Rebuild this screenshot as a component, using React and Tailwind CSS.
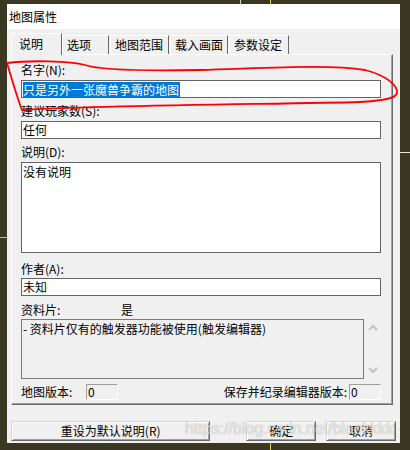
export default function App() {
  const tabs = [
    { name: "选项", w: "w-[47px]" },
    { name: "地图范围", w: "w-[59px]" },
    { name: "载入画面", w: "w-[58px]" },
    { name: "参数设定", w: "w-[60px]" },
  ];

  return (
    <div className="relative w-[410px] h-[450px] overflow-hidden bg-[#3a3822] pt-[4px] pl-[7px] font-['Noto_Sans_CJK_SC',sans-serif] text-[12px] text-black">
      {/* background texture lines */}
      <div className="absolute left-[240px] top-0 w-px h-[4px] bg-[#d8d8c0]" />
      <div className="absolute left-[270px] top-0 w-px h-[4px] bg-[#e0d040]" />
      <div className="absolute left-[400px] top-[152px] w-[10px] h-px bg-[#e8e8d8]" />
      <div className="absolute left-0 top-[237px] w-[7px] h-px bg-[#d8c840]" />
      <div className="absolute left-[270px] top-[443px] w-px h-[7px] bg-[#e0d040]" />

      {/* dialog */}
      <div className="w-[393px] h-[439px] bg-[#f0f0f0] flex flex-col">
        {/* title bar */}
        <div className="h-[25px] bg-white flex items-center pl-[2px] leading-[14px]">地图属性</div>

        <div className="px-[4px] pt-[4px]">
          {/* tabs */}
          <div className="relative z-10 flex items-end h-[22px]">
            <div className="w-[51px] h-[22px] bg-[#f0f0f0] border-t border-l border-white border-r border-r-[#696969] pl-[7px] pt-[2px] leading-[16px]">
              说明
            </div>
            {tabs.map((t, i) => (
              <div
                key={t.name}
                className={`${t.w} ${i === 0 ? "" : "ml-px"} h-[19px] mb-px bg-[#f0f0f0] border-t border-l border-white border-r border-r-[#696969] pl-[4px] pt-[1px] leading-[16px]`}
              >
                {t.name}
              </div>
            ))}
          </div>

          {/* tab panel */}
          <div className="-mt-px w-[382px] h-[351px] border-t border-l border-white border-r border-b border-r-[#696969] border-b-[#696969] shadow-[inset_-1px_-1px_0_#a0a0a0] pl-[9px] pt-[8px]">
            <div className="h-[14px] leading-[14px]">名字(N):</div>
            <div className="mt-[3px] w-[360px] h-[18px] border border-[#646464] bg-white pl-px">
              <span className="inline-block h-[16px] leading-[16px] bg-[#0078d7] text-white pr-px">只是另外一张魔兽争霸的地图</span>
            </div>

            <div className="mt-[6px] h-[14px] leading-[14px]">建议玩家数(S):</div>
            <div className="mt-[3px] w-[360px] h-[18px] border border-[#646464] bg-white pl-px leading-[16px]">任何</div>

            <div className="mt-[6px] h-[14px] leading-[14px]">说明(D):</div>
            <div className="mt-[3px] w-[360px] h-[91px] border border-[#646464] bg-white pl-px pt-px leading-[16px]">没有说明</div>

            <div className="mt-[9px] h-[14px] leading-[14px]">作者(A):</div>
            <div className="mt-[2px] w-[360px] h-[18px] border border-[#646464] bg-white pl-px leading-[16px]">未知</div>

            <div className="mt-[7px] h-[14px] leading-[14px] flex">
              <span className="w-[100px]">资料片:</span>
              <span>是</span>
            </div>
            <div className="mt-[2px] flex">
              <div className="w-[343px] h-[60px] border border-[#7a7a7a] bg-[#f0f0f0] pl-px pt-px leading-[16px]">
                - 资料片仅有的触发器功能被使用(触发编辑器)
              </div>
              <div className="w-[17px] h-[60px] flex flex-col items-center justify-between py-[5px]">
                <svg width="10" height="7" viewBox="0 0 10 7">
                  <path d="M1 6 L5 2 L9 6" fill="none" stroke="#c4c4c4" strokeWidth="2" />
                </svg>
                <svg width="10" height="7" viewBox="0 0 10 7">
                  <path d="M1 1 L5 5 L9 1" fill="none" stroke="#c4c4c4" strokeWidth="2" />
                </svg>
              </div>
            </div>

            <div className="mt-[5px] w-[360px] h-[16px] flex items-center leading-[14px]">
              <span className="w-[65px]">地图版本:</span>
              <div className="w-[32px] h-[16px] border-t border-l border-[#a0a0a0] border-r border-b border-r-white border-b-white pl-px leading-[14px]">0</div>
              <div className="flex-1" />
              <span>保存并纪录编辑器版本:</span>
              <div className="ml-[2px] w-[32px] h-[16px] border-t border-l border-[#a0a0a0] border-r border-b border-r-white border-b-white pl-px leading-[14px]">0</div>
            </div>
          </div>

          {/* buttons */}
          <div className="mt-[16px] flex">
            <button className="w-[200px] h-[20px] bg-[#f0f0f0] border-t border-l border-[#d4d4d4] border-r border-b border-r-[#696969] border-b-[#696969] shadow-[inset_1px_1px_0_#ffffff,inset_-1px_-1px_0_#a0a0a0] leading-[16px]">
              重设为默认说明(R)
            </button>
            <button className="ml-[36px] w-[70px] h-[20px] bg-[#f0f0f0] border-t border-l border-[#d4d4d4] border-r border-b border-r-[#696969] border-b-[#696969] shadow-[inset_1px_1px_0_#ffffff,inset_-1px_-1px_0_#a0a0a0] leading-[16px]">
              确定
            </button>
            <button className="ml-[10px] w-[70px] h-[20px] bg-[#f0f0f0] border-t border-l border-[#d4d4d4] border-r border-b border-r-[#696969] border-b-[#696969] shadow-[inset_1px_1px_0_#ffffff,inset_-1px_-1px_0_#a0a0a0] leading-[16px]">
              取消
            </button>
          </div>
        </div>
      </div>

      {/* red hand-drawn mark */}
      <svg className="absolute left-0 top-0 pointer-events-none" width="410" height="450" viewBox="0 0 410 450">
        <path
          d="M7 63 C30 60 70 61 85 65 C100 70 150 71 200 70 C270 68 330 64 365 70 C385 75 398 85 397 93 C396 99 380 101 360 102 C300 104 100 105 22 110 C18 100 12 80 7 63"
          fill="none"
          stroke="#ff0000"
          strokeWidth="1.8"
          strokeLinecap="round"
        />
      </svg>

      {/* watermark */}
      <div className="absolute left-[185px] top-[419px] font-['Liberation_Sans',sans-serif] text-[16px] leading-[20px] text-white/70 [text-shadow:0_0_1px_rgba(0,0,0,0.35)] pointer-events-none whitespace-nowrap">
        https://blog.csdn.net/blackkkk
      </div>
    </div>
  );
}
